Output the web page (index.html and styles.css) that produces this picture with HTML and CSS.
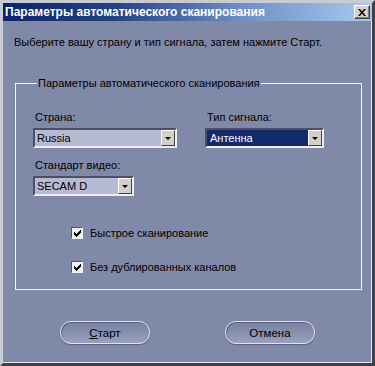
FILE: index.html
```html
<!DOCTYPE html>
<html lang="ru">
<head>
    <meta charset="UTF-8">
    <title>Параметры автоматического сканирования</title>
    <link rel="stylesheet" href="styles.css">
</head>
<body>
    <div class="window">
        <div class="titlebar">
            <span class="title">Параметры автоматического сканирования</span>
            <span class="close">
                <svg width="8" height="7" viewBox="0 0 8 7"><path d="M0 0h2l2 2.5L6 0h2L5 3.5 8 7H6L4 4.5 2 7H0l3-3.5z" fill="#000"/></svg>
            </span>
        </div>

        <p class="intro">Выберите вашу страну и тип сигнала, затем нажмите Старт.</p>

        <fieldset class="group">
            <legend>Параметры автоматического сканирования</legend>

            <div class="fields">
                <div class="field">
                    <label>Страна:</label>
                    <div class="select select-country">
                        <span class="value">Russia</span>
                        <span class="arrow"></span>
                    </div>
                </div>
                <div class="field field-signal">
                    <label>Тип сигнала:</label>
                    <div class="select select-signal selected">
                        <span class="value">Антенна</span>
                        <span class="arrow"></span>
                    </div>
                </div>
                <div class="field">
                    <label>Стандарт видео:</label>
                    <div class="select select-video">
                        <span class="value">SECAM D</span>
                        <span class="arrow"></span>
                    </div>
                </div>
            </div>

            <div class="checks">
                <div class="check">
                    <span class="box"><svg width="7" height="7" viewBox="0 0 7 7"><path d="M0 2h1v1h1v1h1V3h1V2h1V1h1V0h1v3H6v1H5v1H4v1H3v1H2V6H1V5H0z" fill="#000"/></svg></span>
                    Быстрое сканирование
                </div>
                <div class="check">
                    <span class="box"><svg width="7" height="7" viewBox="0 0 7 7"><path d="M0 2h1v1h1v1h1V3h1V2h1V1h1V0h1v3H6v1H5v1H4v1H3v1H2V6H1V5H0z" fill="#000"/></svg></span>
                    Без дублированных каналов
                </div>
            </div>
        </fieldset>

        <div class="buttons">
            <button class="btn"><u>С</u>тарт</button>
            <button class="btn">Отмена</button>
        </div>
    </div>
</body>
</html>
```

FILE: styles.css
```css
body {
    margin: 0;
    background-color: #7f87a6;
    font-family: 'Liberation Sans', Arial, sans-serif;
    font-size: 11px;
    color: #000;
}

.window {
    box-sizing: border-box;
    width: 375px;
    height: 366px;
    background-color: #8189a8;
    border: 3px solid;
    border-color: #c8cad4 #404048 #404048 #c8cad4;
    box-shadow: inset -1px -1px 0 #e6e8f0;
}

.titlebar {
    display: flex;
    align-items: center;
    justify-content: space-between;
    height: 18px;
    padding: 0 2px 0 2px;
    background: linear-gradient(to right, #0a246a 0%, #244282 30%, #6f8fc4 65%, #a6caf0 100%);
}

.title {
    color: #fff;
    font-family: 'Liberation Sans', Arial, sans-serif;
    font-weight: bold;
    font-size: 12px;
}

.close {
    display: flex;
    align-items: center;
    justify-content: center;
    box-sizing: border-box;
    width: 16px;
    height: 14px;
    background-color: #d4d0c8;
    border: 1px solid;
    border-color: #fff #404040 #404040 #fff;
    box-shadow: inset -1px -1px 0 #808080;
}

.intro {
    margin: 14px 0 0 11px;
    line-height: 14px;
}

.group {
    box-sizing: border-box;
    width: 347px;
    height: 214px;
    margin: 27px 0 0 12px;
    padding: 0 0 0 17px;
    border: 1px solid #f4f4f8;
}

.group legend {
    padding: 0 1px 0 1px;
    margin-left: 4px;
    line-height: 14px;
}

.fields {
    display: grid;
    grid-template-columns: 172px 120px;
    row-gap: 10px;
    margin-top: 20px;
}

.field label {
    display: block;
    line-height: 14px;
    margin: 0 0 4px 2px;
}

.select {
    box-sizing: border-box;
    display: flex;
    align-items: center;
    justify-content: space-between;
    height: 20px;
    background-color: #b7bad3;
    border: 2px solid;
    border-color: #4a4e66 #f0f0f4 #f0f0f4 #4a4e66;
    padding-left: 2px;
}

.select-country { width: 144px; }
.select-signal { width: 119px; }
.select-video { width: 101px; }

.select.selected {
    background-color: #14286c;
    color: #fff;
}

.select.selected .value {
    padding-left: 1px;
}

.arrow {
    position: relative;
    box-sizing: border-box;
    width: 14px;
    height: 16px;
    background-color: #d4d0c8;
    border: 1px solid;
    border-color: #fff #404040 #404040 #fff;
}

.arrow::after {
    content: "";
    position: absolute;
    left: 3px;
    top: 6px;
    border-left: 3px solid transparent;
    border-right: 3px solid transparent;
    border-top: 3px solid #000;
}

.checks {
    display: flex;
    flex-direction: column;
    gap: 20px;
    margin: 30px 0 0 38px;
}

.check {
    display: flex;
    align-items: center;
    gap: 7px;
    line-height: 14px;
}

.box {
    box-sizing: border-box;
    display: flex;
    align-items: center;
    justify-content: center;
    width: 12px;
    height: 12px;
    background-color: #eef0f4;
    border: 1px solid;
    border-color: #50546c #f4f4f8 #f4f4f8 #50546c;
}

.buttons {
    display: flex;
    gap: 75px;
    margin: 31px 0 0 57px;
}

.btn {
    box-sizing: border-box;
    width: 90px;
    height: 23px;
    padding: 0;
    font-family: 'Liberation Sans', Arial, sans-serif;
    font-size: 11.5px;
    color: #000;
    background: linear-gradient(to bottom, #7a82a2 0%, #8a92b0 60%, #9aa2c0 100%);
    border: 1px solid #dde2f2;
    border-radius: 11px;
    box-shadow: inset 1px 1px 0 #5a6282, 0 1px 1px #5a6080;
}
```
